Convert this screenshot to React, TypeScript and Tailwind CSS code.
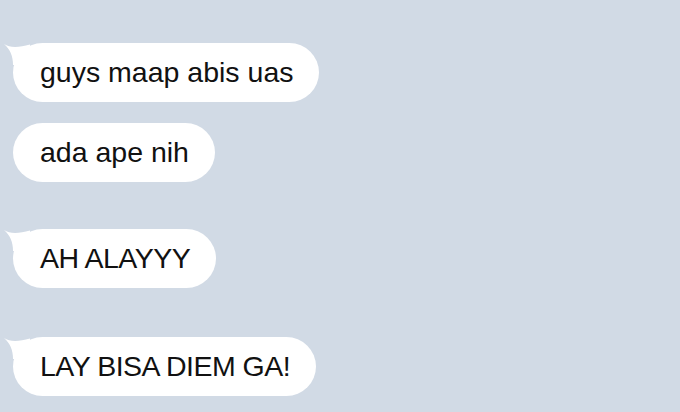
import React from "react";

function Bubble({ text, tail, caps }: { text: string; tail?: boolean; caps?: boolean }) {
  return (
    <div className="relative">
      {tail && (
        <svg
          className="absolute left-[-10px] top-0"
          width="30"
          height="24"
          viewBox="0 0 30 24"
        >
          <path d="M1 1 C 7 5 16 4.5 27 1.5 L 27 22 L 10 22 C 10 13 7 6 1 1 Z" fill="#ffffff" />
        </svg>
      )}
      <div
        className={
          caps
            ? "relative flex h-[59px] items-center rounded-full bg-white pl-[27px] pr-[26px] text-[28.5px] leading-none tracking-[-0.5px] text-[#111] [font-family:'Liberation_Sans',Arial,sans-serif]"
            : "relative flex h-[59px] items-center rounded-full bg-white pl-[27px] pr-[26px] text-[28.5px] leading-none text-[#111] [font-family:'Liberation_Sans',Arial,sans-serif]"
        }
      >
        {text}
      </div>
    </div>
  );
}

export default function App() {
  return (
    <div className="flex h-[412px] w-[680px] flex-col items-start bg-[#d1dae5] pl-[13px] pt-[43px]">
      <Bubble text="guys maap abis uas" tail />
      <div className="mt-[21px]">
        <Bubble text="ada ape nih" />
      </div>
      <div className="mt-[47px]">
        <Bubble text="AH ALAYYY" tail caps />
      </div>
      <div className="mt-[49px]">
        <Bubble text="LAY BISA DIEM GA!" tail caps />
      </div>
    </div>
  );
}
